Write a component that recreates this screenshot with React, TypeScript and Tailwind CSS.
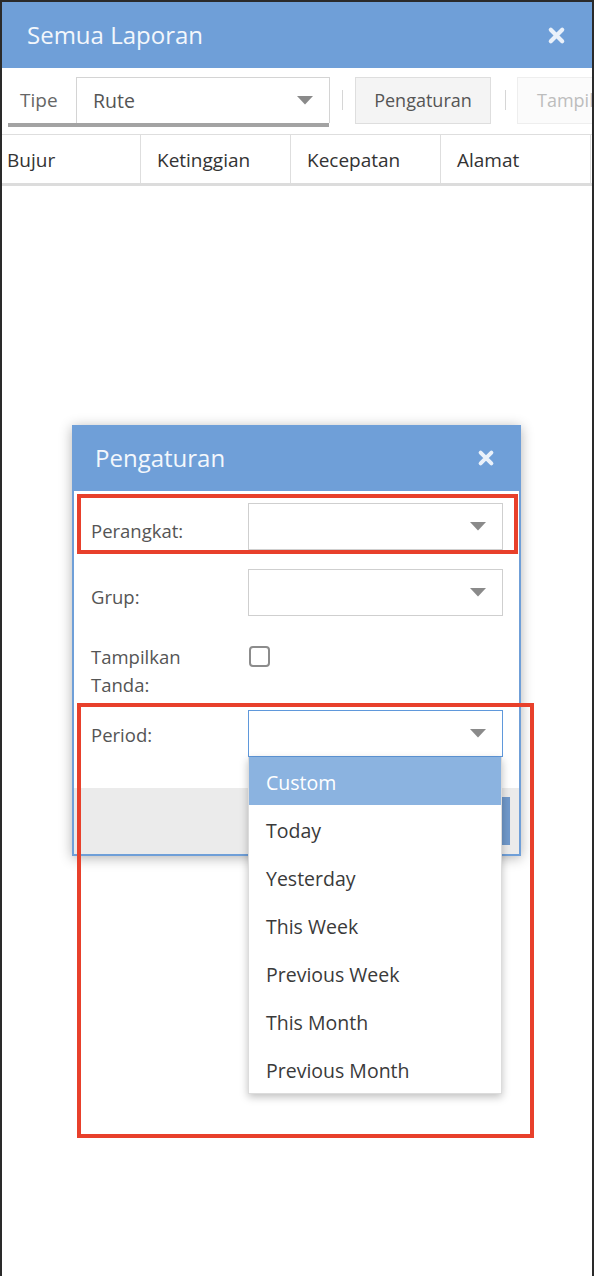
import React from 'react';

const font = { fontFamily: '"Open Sans", "Noto Sans", sans-serif' };

const CloseIcon = ({ size = 19 }: { size?: number }) => (
    <svg width={size} height={size} viewBox="0 0 20 20">
        <path d="M4 4 L16 16 M16 4 L4 16" stroke="currentColor" strokeWidth="4.4" strokeLinecap="round" />
    </svg>
);

const Caret = () => (
    <svg width="16" height="9" viewBox="0 0 16 9">
        <path d="M0 0 H16 L8 8.5 Z" fill="#8a8a8a" />
    </svg>
);

const SelectBox = ({ focused = false }: { focused?: boolean }) => (
    <div
        className={`w-[255px] h-[47px] shrink-0 flex items-center justify-end pr-[16px] bg-white border ${
            focused ? 'border-[#5f98db]' : 'border-[#cfcfcf]'
        }`}
    >
        <Caret />
    </div>
);

const periods = ['Custom', 'Today', 'Yesterday', 'This Week', 'Previous Week', 'This Month', 'Previous Month'];

export default function App() {
    return (
        <div className="w-[594px] h-[1276px] bg-[#2a2a2a] pt-[2px] px-[2px]" style={font}>
            <div className="relative h-full bg-white flex flex-col overflow-hidden">
                {/* Header */}
                <div className="h-[66px] shrink-0 bg-[#6f9fd8] flex items-center justify-between pl-[25px] pr-[26px]">
                    <span className="text-[24px] text-[#f3f7fc]">Semua Laporan</span>
                    <span className="text-[#eaf1fa]">
                        <CloseIcon />
                    </span>
                </div>

                {/* Toolbar */}
                <div className="h-[66px] shrink-0 flex items-start pt-[9px] pl-[6px] whitespace-nowrap">
                    <div className="flex items-stretch shrink-0 border-b-[4px] border-[#a3a3a3] w-[321px]">
                        <span className="w-[68px] shrink-0 pl-[12px] flex items-center text-[19px] text-[#666]">Tipe</span>
                        <div className="w-[254px] shrink-0 h-[46px] flex items-center justify-between pl-[16px] pr-[16px] border border-b-0 border-[#d4d4d4] text-[19.5px] text-[#555]">
                            Rute
                            <Caret />
                        </div>
                    </div>
                    <div className="w-px shrink-0 h-[20px] bg-[#d6d6d6] mt-[13px] ml-[13px]" />
                    <div className="ml-[12px] shrink-0 w-[136px] h-[47px] flex items-center justify-center bg-[#f4f4f4] border border-[#dedede] text-[18px] text-[#555]">
                        Pengaturan
                    </div>
                    <div className="w-px shrink-0 h-[20px] bg-[#d6d6d6] mt-[13px] ml-[14px]" />
                    <div className="ml-[11px] shrink-0 w-[110px] h-[47px] flex items-center pl-[19px] bg-[#fbfbfb] border border-[#eeeeee] text-[18px] text-[#bdbdbd]">
                        Tampilkan
                    </div>
                </div>

                {/* Table header */}
                <div className="shrink-0 flex border-t border-[#dedede] border-b-[3px] border-b-[#dcdcdc] h-[52px] ml-[-11px] whitespace-nowrap">
                    {['Bujur', 'Ketinggian', 'Kecepatan', 'Alamat'].map((c) => (
                        <div
                            key={c}
                            className="w-[150px] shrink-0 pl-[16px] pt-[2px] flex items-center border-r border-[#dedede] text-[19px] text-[#333]"
                        >
                            {c}
                        </div>
                    ))}
                </div>

                {/* Settings dialog */}
                <div className="absolute left-[70px] top-[423px] w-[449px] h-[431px] border-2 border-[#6f9fd8] bg-white shadow-[0_2px_12px_rgba(0,0,0,0.3)] flex flex-col">
                    <div className="h-[66px] shrink-0 bg-[#6f9fd8] flex items-center justify-between pl-[23px] pr-[26px] mt-[-2px] mx-[-2px]">
                        <span className="text-[24px] text-[#f3f7fc]">Pengaturan</span>
                        <span className="text-[#eaf1fa]">
                            <CloseIcon size={18} />
                        </span>
                    </div>

                    <div className="flex-1 flex flex-col pt-[12px] pl-[17px] text-[18.5px] text-[#555]">
                        <div className="flex items-center">
                            <span className="w-[157px] pt-[8px]">Perangkat:</span>
                            <SelectBox />
                        </div>
                        <div className="flex items-center mt-[19px]">
                            <span className="w-[157px] pt-[8px]">Grup:</span>
                            <SelectBox />
                        </div>
                        <div className="flex items-start mt-[27px]">
                            <span className="w-[157px] leading-[28px]">
                                Tampilkan
                                <br />
                                Tanda:
                            </span>
                            <div className="mt-[3px] ml-[1px] w-[21px] h-[21px] border-2 border-[#8c8c8c] rounded-[4px]" />
                        </div>
                        <div className="flex items-center mt-[11px] relative">
                            <span className="w-[157px] pt-[3px]">Period:</span>
                            <div className="relative">
                                <SelectBox focused />
                                {/* Open dropdown */}
                                <div className="absolute left-0 top-[47px] w-[254px] bg-white border border-[#dcdcdc] border-t-0 shadow-[0_3px_8px_rgba(0,0,0,0.25)] z-20">
                                    {periods.map((p, i) => (
                                        <div
                                            key={p}
                                            className={`h-[48px] flex items-center pl-[17px] pt-[3px] text-[19.5px] ${
                                                i === 0 ? 'bg-[#8bb3e0] text-white' : 'text-[#3a3a3a]'
                                            }`}
                                        >
                                            {p}
                                        </div>
                                    ))}
                                </div>
                            </div>
                        </div>
                    </div>

                    <div className="h-[66px] shrink-0 bg-[#ebebeb] flex justify-end items-start pt-[9px] pr-[9px]">
                        <div className="w-[90px] h-[48px] bg-[#7099cb]" />
                    </div>
                </div>

                {/* Annotation boxes */}
                <div className="absolute left-[75px] top-[492px] w-[441px] h-[60px] border-[4px] border-[#e8402b] z-30" />
                <div className="absolute left-[75px] top-[701px] w-[457px] h-[435px] border-[4px] border-[#e8402b] z-30" />
            </div>
        </div>
    );
}
